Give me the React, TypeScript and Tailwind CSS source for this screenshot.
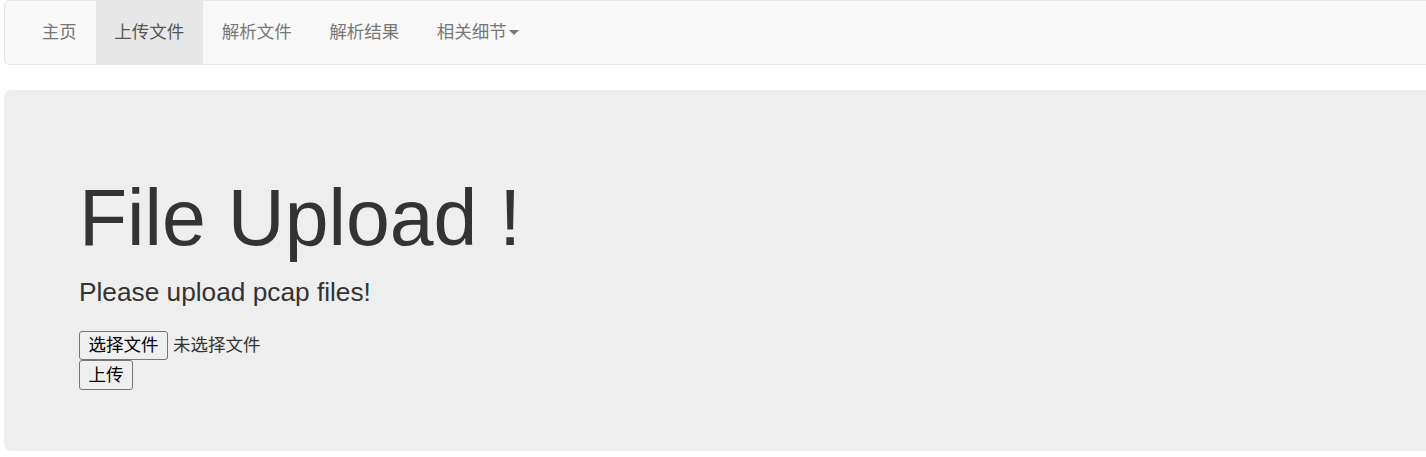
import React from "react";

const cjk = '"Liberation Sans", "Noto Sans CJK SC", sans-serif';

export default function App() {
  const items = ["主页", "上传文件", "解析文件", "解析结果"];
  return (
    <div className="w-[1426px] h-[457px] overflow-hidden bg-white" style={{ fontFamily: cjk }}>
      <div className="ml-[4px] w-[1430px]">
        <nav className="h-[65px] bg-[#f8f8f8] border border-[#e7e7e7] rounded-[5px] flex pl-[18px]">
          <ul className="flex">
            {items.map((t, i) => (
              <li key={t}>
                <a
                  className={`block px-[18.75px] pt-[18.75px] pb-[18.75px] h-[63px] text-[17.5px] leading-[25px] ${
                    i === 1 ? "bg-[#e7e7e7] text-[#555]" : "text-[#777]"
                  }`}
                >
                  {t}
                </a>
              </li>
            ))}
            <li>
              <a className="flex items-center px-[18.75px] pt-[18.75px] pb-[18.75px] h-[63px] text-[17.5px] leading-[25px] text-[#777]">
                相关细节
                <span className="ml-[2.5px] inline-block w-0 h-0 border-l-[5px] border-r-[5px] border-t-[5px] border-l-transparent border-r-transparent border-t-[#777]" />
              </a>
            </li>
          </ul>
        </nav>
        <div className="mt-[25px] h-[361px] bg-[#eeeeee] rounded-[7.5px] px-[75px] pt-[60px] pb-[60px] text-[#333]">
          <h1 className="mt-[25px] mb-[12.5px] text-[78.75px] leading-[1.1] font-normal">File Upload !</h1>
          <p className="text-[26.25px] leading-[37.5px] mb-[18.75px]">Please upload pcap files!</p>
          <div className="flex items-center h-[30px] text-[17.5px]">
            <button className="h-[29px] w-[89px] border border-[#767676] rounded-[3px] bg-[#efefef] text-black text-[17.5px] leading-[25px] flex items-center justify-center">
              选择文件
            </button>
            <span className="ml-[5px] text-[#333]">未选择文件</span>
          </div>
          <button className="h-[30px] w-[54px] border border-[#767676] rounded-[3px] bg-[#efefef] text-black text-[17.5px] leading-[25px] flex items-center justify-center">
            上传
          </button>
        </div>
      </div>
    </div>
  );
}
